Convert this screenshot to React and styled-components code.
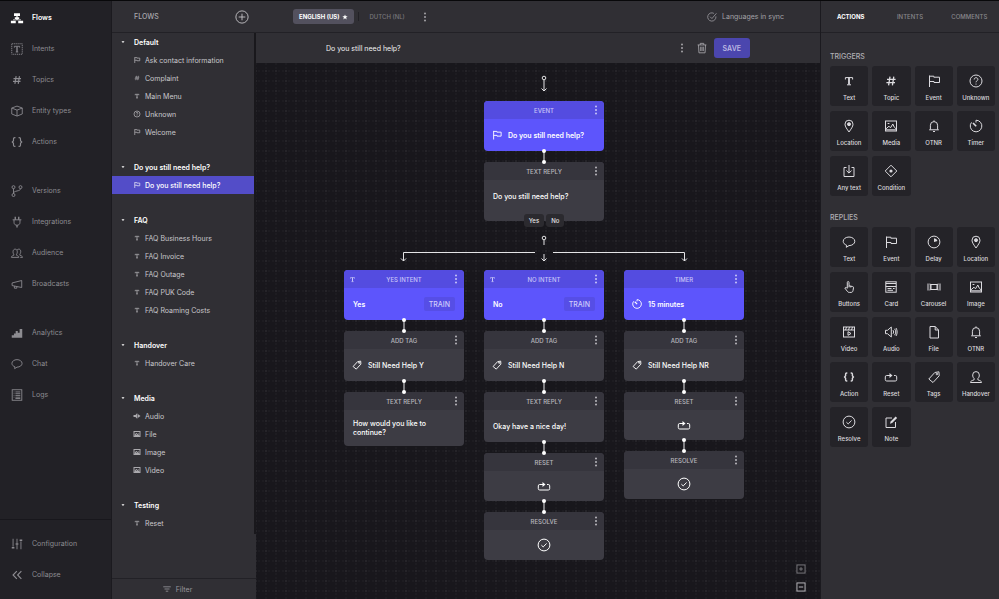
import styled, { createGlobalStyle, css } from "styled-components";

const shapes = {
	flows: (
		<g fill="currentColor" stroke="none">
			<path d="M4.6 2.6h6.8v3.2H4.6zM5.5 7h5v2.2h-5zM1 11h5.6v3H1zM9.4 11H15v3H9.4z" />
			<path d="M7.3 5h1.4v5H7.3zM3.5 9.6h9v1h-9z" />
		</g>
	),
	intents: (
		<>
			<rect x="2" y="2" width="12" height="12" strokeDasharray="1.4 .8" />
			<path d="M5 6.4V4.9h6v1.5M6.6 11.4h2.8" />
			<path d="M8 5v6.4" strokeWidth="1.5" />
		</>
	),
	hash: (
		<path d="M7 3.6 5.6 12.4M10.8 3.6 9.4 12.4M4 6.4h8.6M3.4 9.6H12" strokeWidth="1.3" />
	),
	box: (
		<>
			<path d="M2 4.6 8 2.4l6 2.2v6.8l-6 2.4-6-2.4z" />
			<path d="M2 4.6 8 7l6-2.4M8 7v6.8" />
		</>
	),
	bracesBig: (
		<path
			d="M6.2 3h-.7C4.5 3 4 3.5 4 4.4v2.2L2.6 8 4 9.4v2.2c0 .9.5 1.4 1.5 1.4h.7M9.8 3h.7c1 0 1.5.5 1.5 1.4v2.2L13.4 8 12 9.4v2.2c0 .9-.5 1.4-1.5 1.4h-.7"
			strokeWidth="1.3"
		/>
	),
	branch: (
		<>
			<circle cx="4" cy="3.6" r="1.7" />
			<circle cx="12" cy="3.6" r="1.7" />
			<circle cx="4" cy="12.6" r="1.7" />
			<path d="M4 5.3v5.6M12 5.3c0 3.6-8 1.7-8 5.6" />
		</>
	),
	plug: (
		<>
			<path d="M3 5.5h10M4.6 5.5v3c0 1.9 1.3 3.2 3.4 3.2s3.4-1.3 3.4-3.2v-3" />
			<path d="M6 2v3.4M10 2v3.4M8 11.7v2.5" strokeWidth="1.5" />
		</>
	),
	audience: (
		<>
			<path d="M1.6 13c0-1.5 1.4-1.8 2.7-2.4V9.4C3 8 3 3.6 5.9 3.6S8.8 8 7.5 9.4v1.2c1.3.6 2.6.9 2.6 2.4z" />
			<path d="M8.3 4.2c3-1.8 4.5.8 3.8 3.4-.2.8-.5 1.4-.8 1.8v1.2c1.5.6 3 .9 3 2.4h-2.6" />
		</>
	),
	horn: <path d="M2.4 6.8 13.4 4v8L2.4 9.8zM5 10.4v2.4h2.8V11" />,
	bars: (
		<path
			d="M2 10.5h2.5V8.6h2V5.8h2.4v2H11V3.5h3v10H2z"
			fill="currentColor"
			stroke="none"
		/>
	),
	bubble: (
		<path d="M5.6 11.2C3.6 10.5 2.2 9.1 2.2 7.3 2.2 4.9 4.8 3 8 3s5.8 1.9 5.8 4.3-2.6 4.3-5.8 4.3l-2.7 1.7z" />
	),
	logs: (
		<>
			<rect x="2.5" y="2" width="11" height="12" />
			<path d="M6.2 4.5h5.6M6.2 6.5h5.6M6.2 8.5h5.6M6.2 10.5h5.6M6.2 12h5.6M4.2 4.5H5M4.2 6.5H5M4.2 8.5H5M4.2 10.5H5" />
		</>
	),
	sliders: (
		<>
			<path d="M3.5 2v9M8 2v5M8 9v5M12.5 5v9" />
			<path d="M2 12.2h3M6.5 8h3M11 3.8h3" strokeWidth="1.8" />
		</>
	),
	collapse: <path d="m7.8 3.5-4.3 4.5 4.3 4.5M13 3.5 8.7 8l4.3 4.5" />,
	type: (
		<>
			<path d="M4.4 6.5V4.6h7.2v1.9M6 11.8h4" />
			<path d="M8 4.6v7" strokeWidth="1.8" />
		</>
	),
	flag: <path d="M3.5 14V2.5M3.5 3.2h4.3v1h5.7v5.3H8v-1H3.5" />,
	help: (
		<>
			<circle cx="8" cy="8" r="6" />
			<path d="M6.2 6.5C6.2 5.3 7 4.7 8 4.7s1.9.6 1.9 1.7C9.9 7.8 8 7.7 8 9.3M8 10.6v1" />
		</>
	),
	pin: (
		<>
			<path d="M8 14C6 11 4 8.7 4 6.2a4 4 0 0 1 8 0C12 8.7 10 11 8 14z" />
			<circle cx="8" cy="6.2" r="1.5" fill="currentColor" />
		</>
	),
	image: (
		<>
			<rect x="2.5" y="3" width="11" height="10" />
			<path d="M3 10.8 6 8.2l1.5 1.6L9.8 6l1.5 3.2 1.8 1.6M3 11.8h10M4.6 5.5h1.8" />
		</>
	),
	bell: (
		<path d="M3.2 11.8h9.6M4.4 11.6V7.2a3.6 3.6 0 0 1 7.2 0v4.4M8 3.5V2.4M7 13.5h2" />
	),
	timer: (
		<>
			<path d="M8 4.5V2.2a5.8 5.8 0 1 1-4.5 2.2" />
			<path d="M8.2 8.2 5 5" strokeWidth="1.6" />
		</>
	),
	inbox: <path d="M5.5 4.5H3v9h10v-9h-2.5M8 2v8M5.4 7.5 8 10.1l2.6-2.6" />,
	condition: (
		<>
			<path d="m8 2.2 5.8 5.8L8 13.8 2.2 8z" />
			<circle cx="8" cy="8" r="1.6" fill="currentColor" stroke="none" />
		</>
	),
	delay: (
		<>
			<circle cx="8" cy="8" r="5.9" />
			<path d="M8 8V4.2A3.8 3.8 0 0 1 11.5 7z" fill="currentColor" stroke="none" />
		</>
	),
	hand: (
		<path d="M6.3 9V3.4c0-1.2 1.7-1.2 1.7 0v3.4l3.6.7c.7.1 1 .6.9 1.3l-.5 2.8c-.2 1.1-.8 1.8-2 1.8H8.3c-.9 0-1.4-.3-1.9-1L3.8 9c.7-.8 1.6-.8 2.5.5M8 6.8v1.6M9.8 7.1v1.4" />
	),
	card: (
		<>
			<rect x="2.8" y="2.8" width="10.4" height="10.4" />
			<path d="M2.8 7.5h10.4M4.5 9.5h4M4.5 11.3H10M10 9.5h1.6M3 4.5h10" />
		</>
	),
	carousel: (
		<>
			<rect x="5" y="5.5" width="6" height="5" />
			<path d="M2 4.5v7M14 4.5v7M3.5 5h.8v6h-.8M12.5 5h-.8v6h.8" />
		</>
	),
	video: (
		<>
			<rect x="2.5" y="3" width="11" height="10" />
			<path d="M2.5 6h11M4.5 6l1-3M7.5 6l1-3M10.5 6l1-3" />
			<path d="m7 7.7 3 1.8-3 1.8z" />
		</>
	),
	audio: (
		<path d="M2.5 6.3h2L8.3 3v10L4.5 9.7h-2zM10 6.2c.8 1 .8 2.6 0 3.6M11.5 4.8c1.7 1.7 1.7 4.7 0 6.4M13 4c1.5 2.2 1.5 5.8 0 8" />
	),
	file: <path d="M4 2.5h5.2L12.5 6v8H4zM9.2 2.5V6h3.3" />,
	braces: (
		<path
			d="M6.3 4h-.5c-.8 0-1.2.4-1.2 1.1v1.7L3.6 8l1 1.2v1.7c0 .7.4 1.1 1.2 1.1h.5M9.7 4h.5c.8 0 1.2.4 1.2 1.1v1.7l1 1.2-1 1.2v1.7c0 .7-.4 1.1-1.2 1.1h-.5"
			strokeWidth="1.4"
		/>
	),
	reset: (
		<>
			<path d="M7 6.5H3.7a1.4 1.4 0 0 0-1.4 1.4v2.7A1.4 1.4 0 0 0 3.7 12h8.6a1.4 1.4 0 0 0 1.4-1.4V7.9a1.4 1.4 0 0 0-1.4-1.4H11" />
			<path d="m6.5 4 3 2.5-3 2.5z" fill="currentColor" stroke="none" />
		</>
	),
	tag: (
		<>
			<path d="m2.8 10 6-6.5 4.1-.7.3 4-6.2 6.7z" />
			<circle cx="10.9" cy="5" r=".8" />
		</>
	),
	person: (
		<path d="M2.5 13.5c0-1.7 1.7-1.9 3.6-2.7V9.5C5 8.5 4.7 7.5 4.7 5.9a3.3 3.3 0 0 1 6.6 0c0 1.6-.3 2.6-1.4 3.6v1.3c1.9.8 3.6 1 3.6 2.7z" />
	),
	check: (
		<>
			<circle cx="8" cy="8" r="5.9" />
			<path d="m5.4 8.2 1.8 1.7 3.4-3.4" />
		</>
	),
	synced: (
		<>
			<path d="M13.2 7.2a5.5 5.5 0 1 1-2.7-4" />
			<path d="m5.4 7.6 2.5 2.5 6-7" />
		</>
	),
	note: (
		<>
			<path d="M9 4H3v9.5h9.5V8" />
			<path d="m7 9.8.6-2.2 5-5.1L14.1 4l-5 5z" fill="currentColor" stroke="none" />
		</>
	),
	trash: (
		<path d="M3 4.5h10M6 4.5V2.7h4v1.8M4 4.5l.5 9h7l.5-9M6.5 6.5v5M8 6.5v5M9.5 6.5v5" />
	),
	filter: <path d="M2 4.5h12M4 8h8M6 11.5h4" />,
	plus: (
		<>
			<circle cx="8" cy="8" r="7" />
			<path d="M8 4.2v7.6M4.2 8h7.6" />
		</>
	),
	sound: (
		<path
			d="M1 6h4v4H1zM5 6l3.5-4v12L5 10zM9.5 4 15 8l-5.5 4z"
			fill="currentColor"
			stroke="none"
		/>
	),
	picture: (
		<>
			<rect x="2" y="3" width="12" height="10" strokeWidth="2" />
			<path d="m4 10 3-4 2 4 2-3" strokeWidth="2" />
			<path d="M3 11h10" strokeWidth="3" />
		</>
	),
	star: (
		<path
			d="m8 1 2 5h5l-4 3.2 1.5 5.3L8 11.3l-4.5 3.2L5 9.2 1 6h5z"
			fill="currentColor"
			stroke="none"
		/>
	),
	dots: (
		<g fill="currentColor" stroke="none">
			<circle cx="8" cy="4.5" r="1" />
			<circle cx="8" cy="8" r="1" />
			<circle cx="8" cy="11.5" r="1" />
		</g>
	),
	caret: <path d="M2 5h12L8 12z" fill="currentColor" stroke="none" />,
	zoomIn: (
		<>
			<rect x="1.5" y="1.5" width="13" height="13" />
			<path d="M8 5v6M5 8h6" />
		</>
	),
	zoomOut: (
		<>
			<rect x="1.5" y="1.5" width="13" height="13" />
			<path d="M4.5 8h7" />
		</>
	),
};

const Icon = ({ name, size = 16, weight = 1 }) => (
	<Svg
		width={size}
		height={size}
		viewBox="0 0 16 16"
		strokeWidth={weight}
		aria-hidden="true"
	>
		{shapes[name]}
	</Svg>
);

const navGroups = [
	[
		["flows", "Flows"],
		["intents", "Intents"],
		["hash", "Topics"],
		["box", "Entity types"],
		["bracesBig", "Actions"],
	],
	[
		["branch", "Versions"],
		["plug", "Integrations"],
		["audience", "Audience"],
		["horn", "Broadcasts"],
	],
	[
		["bars", "Analytics"],
		["bubble", "Chat"],
		["logs", "Logs"],
	],
];

const flowGroups = [
	{
		title: "Default",
		items: [
			["flag", "Ask contact information"],
			["hash", "Complaint"],
			["type", "Main Menu"],
			["help", "Unknown"],
			["flag", "Welcome"],
		],
	},
	{
		title: "Do you still need help?",
		items: [["flag", "Do you still need help?", true]],
	},
	{
		title: "FAQ",
		items: [
			["type", "FAQ Business Hours"],
			["type", "FAQ Invoice"],
			["type", "FAQ Outage"],
			["type", "FAQ PUK Code"],
			["type", "FAQ Roaming Costs"],
		],
	},
	{ title: "Handover", items: [["type", "Handover Care"]] },
	{
		title: "Media",
		items: [
			["sound", "Audio"],
			["picture", "File"],
			["picture", "Image"],
			["picture", "Video"],
		],
	},
	{ title: "Testing", items: [["type", "Reset"]] },
];

const triggers = [
	["type", "Text"],
	["hash", "Topic"],
	["flag", "Event"],
	["help", "Unknown"],
	["pin", "Location"],
	["image", "Media"],
	["bell", "OTNR"],
	["timer", "Timer"],
	["inbox", "Any text"],
	["condition", "Condition"],
];

const replies = [
	["bubble", "Text"],
	["flag", "Event"],
	["delay", "Delay"],
	["pin", "Location"],
	["hand", "Buttons"],
	["card", "Card"],
	["carousel", "Carousel"],
	["image", "Image"],
	["video", "Video"],
	["audio", "Audio"],
	["file", "File"],
	["bell", "OTNR"],
	["braces", "Action"],
	["reset", "Reset"],
	["tag", "Tags"],
	["person", "Handover"],
	["check", "Resolve"],
	["note", "Note"],
];

const Link = () => (
	<LinkBox>
		<LinkSvg width="6" height="17" viewBox="0 0 6 17" aria-hidden="true">
			<path d="M3 3v11" stroke="#c9c8cc" strokeWidth="1.2" />
			<circle cx="3" cy="3" r="2" fill="#fff" />
			<circle cx="3" cy="14" r="2" fill="#fff" />
		</LinkSvg>
	</LinkBox>
);

const Node = ({ title, purple, corner, icon, children, $tall, $center }) => (
	<NodeBox $purple={purple}>
		<NodeHead $purple={purple}>
			<Corner>{corner && <Icon name={corner} size={9} weight={1.2} />}</Corner>
			<span>{title}</span>
			<IconButton aria-label={`${title} menu`}>
				<Icon name="dots" />
			</IconButton>
		</NodeHead>
		<NodeBody $tall={$tall} $center={$center} $icon={icon}>
			{icon && <Icon name={icon} size={12} weight={1.2} />}
			{children}
		</NodeBody>
	</NodeBox>
);

const TagNode = ({ text }) => (
	<Node title="ADD TAG" icon="tag">
		{text}
	</Node>
);

const ResetNode = () => (
	<Node title="RESET" $center>
		<Icon name="reset" />
	</Node>
);

const ResolveNode = () => (
	<Node title="RESOLVE" $center>
		<Icon name="check" />
	</Node>
);

const Tiles = ({ title, items }) => (
	<TileSection>
		<TileTitle>{title}</TileTitle>
		<TileGrid>
			{items.map(([icon, label]) => (
				<Tile key={label}>
					<Icon name={icon} />
					{label}
				</Tile>
			))}
		</TileGrid>
	</TileSection>
);

const App = () => {
	return (
		<>
			<Global />
			<Page>
				<Nav>
					{navGroups.map((group, i) => (
						<NavGroup key={i}>
							{group.map(([icon, label]) => (
								<NavItem key={label} href="#" $active={label === "Flows"}>
									<Icon name={icon} size={14} />
									{label}
								</NavItem>
							))}
						</NavGroup>
					))}
					<NavBottom>
						<NavItem href="#">
							<Icon name="sliders" size={14} />
							Configuration
						</NavItem>
						<NavItem href="#">
							<Icon name="collapse" size={14} weight={1.3} />
							Collapse
						</NavItem>
					</NavBottom>
				</Nav>

				<Flows>
					<FlowsHead>
						<FlowsTitle>FLOWS</FlowsTitle>
						<IconButton aria-label="Add flow">
							<Icon name="plus" size={14} />
						</IconButton>
					</FlowsHead>
					<FlowsScroll>
						<FlowList>
							{flowGroups.map(({ title, items }) => (
								<FlowGroup key={title}>
									<GroupTitle>
										<Icon name="caret" size={4} />
										{title}
									</GroupTitle>
									{items.map(([icon, label, active]) => (
										<FlowItem key={label} href="#" $active={active}>
											<Icon name={icon} size={8} weight={1.6} />
											{label}
										</FlowItem>
									))}
								</FlowGroup>
							))}
						</FlowList>
						<Track />
					</FlowsScroll>
					<Filter>
						<Icon name="filter" size={10} weight={1.3} />
						Filter
					</Filter>
				</Flows>

				<Main>
					<Languages>
						<Language $active>
							ENGLISH (US)
							<Icon name="star" size={6} />
						</Language>
						<Divider />
						<Language>DUTCH (NL)</Language>
						<IconButton aria-label="Language menu">
							<Icon name="dots" />
						</IconButton>
						<Sync>
							<Icon name="synced" size={12} />
							Languages in sync
						</Sync>
					</Languages>
					<TitleBar>
						<TitleRow>
							<TitleInput
								aria-label="Flow name"
								defaultValue="Do you still need help?"
							/>
							<IconButton aria-label="Flow menu">
								<Icon name="dots" />
							</IconButton>
							<IconButton aria-label="Delete flow">
								<Icon name="trash" size={14} />
							</IconButton>
							<Save>SAVE</Save>
						</TitleRow>
					</TitleBar>

					<Canvas>
						<Wire width="12" height="38" viewBox="0 0 12 38" aria-hidden="true">
							<circle cx="6" cy="15" r="1.8" />
							<path d="M6 17v11M3.5 25.5 6 28l2.5-2.5" />
						</Wire>
						<Column>
							<Node title="EVENT" icon="flag" purple>
								<strong>Do you still need help?</strong>
							</Node>
							<Link />
							<NodeWithReplies>
								<Node title="TEXT REPLY">Do you still need help?</Node>
								<QuickReplies>
									<QuickReply>Yes</QuickReply>
									<QuickReply>No</QuickReply>
								</QuickReplies>
							</NodeWithReplies>
						</Column>
						<Wire width="292" height="49" viewBox="0 0 292 49" aria-hidden="true">
							<circle cx="146" cy="17" r="1.8" />
							<path d="M146 19v5M5.5 40v-8.5H137M155 31.5h131.5V40M146 33v7" />
							<path d="M3 37.5 5.5 40 8 37.5M143.5 37.5 146 40l2.5-2.5M284 37.5l2.5 2.5 2.5-2.5" />
						</Wire>
						<Branches>
							<Column>
								<Node title="YES INTENT" corner="type" purple>
									<strong>Yes</strong>
									<Train>TRAIN</Train>
								</Node>
								<Link />
								<TagNode text="Still Need Help Y" />
								<Link />
								<Node title="TEXT REPLY" $tall>
									How would you like to continue?
								</Node>
							</Column>
							<Column>
								<Node title="NO INTENT" corner="type" purple>
									<strong>No</strong>
									<Train>TRAIN</Train>
								</Node>
								<Link />
								<TagNode text="Still Need Help N" />
								<Link />
								<Node title="TEXT REPLY">Okay have a nice day!</Node>
								<Link />
								<ResetNode />
								<Link />
								<ResolveNode />
							</Column>
							<Column>
								<Node title="TIMER" icon="timer" purple>
									<strong>15 minutes</strong>
								</Node>
								<Link />
								<TagNode text="Still Need Help NR" />
								<Link />
								<ResetNode />
								<Link />
								<ResolveNode />
							</Column>
						</Branches>
						<Zoom>
							<IconButton aria-label="Zoom in">
								<Icon name="zoomIn" size={10} weight={1.6} />
							</IconButton>
							<IconButton aria-label="Zoom out" $bright>
								<Icon name="zoomOut" size={10} weight={1.6} />
							</IconButton>
						</Zoom>
					</Canvas>
				</Main>

				<Panel>
					<Tabs>
						<Tab $active>ACTIONS</Tab>
						<Tab>INTENTS</Tab>
						<Tab>COMMENTS</Tab>
					</Tabs>
					<Tiles title="TRIGGERS" items={triggers} />
					<Tiles title="REPLIES" items={replies} />
				</Panel>
			</Page>
		</>
	);
};

export default App;

const Global = createGlobalStyle`
	* {
		box-sizing: border-box;
	}
	body {
		margin: 0;
		background: #18171c;
		color: #c9c8cc;
		font-family: Inter, "Liberation Sans", sans-serif;
		font-size: 7px;
		line-height: 9px;
	}
	button, input {
		font: inherit;
		color: inherit;
		background: none;
		border: 0;
		padding: 0;
	}
	a {
		color: inherit;
		text-decoration: none;
	}
`;

const Svg = styled.svg`
	display: block;
	flex: none;
	fill: none;
	stroke: currentColor;
`;

const Page = styled.div`
	display: grid;
	grid-template-columns: 112px 144px 1fr 179px;
	min-height: 100vh;
	border-top: 1px solid #08080a;
`;

const IconButton = styled.button`
	display: flex;
	align-items: center;
	justify-content: center;
	color: ${({ $bright }) => ($bright ? "#b5b4b9" : "inherit")};
`;

const bar = css`
	display: flex;
	align-items: center;
	height: 32px;
	border-bottom: 1px solid #222126;
`;

const Nav = styled.nav`
	display: flex;
	flex-direction: column;
	gap: 18px;
	padding-top: 1px;
	background: #222126;
	border-right: 1px solid #1b1a1f;
`;

const NavGroup = styled.div`
	display: flex;
	flex-direction: column;
`;

const NavItem = styled.a`
	display: flex;
	align-items: center;
	gap: 8px;
	height: 31px;
	padding-left: 10px;
	color: ${({ $active }) => ($active ? "#fff" : "#8d8c91")};
	font-weight: ${({ $active }) => ($active ? 600 : 400)};
`;

const NavBottom = styled.div`
	margin-top: auto;
	padding: 8px 0 9px;
	border-top: 1px solid #18171c;
`;

const Flows = styled.aside`
	display: flex;
	flex-direction: column;
	background: #302f34;
`;

const FlowsHead = styled.div`
	${bar}
	justify-content: space-between;
	padding: 0 7px 0 22px;
`;

const FlowsTitle = styled.h2`
	margin: 0;
	font-size: 7px;
	font-weight: 500;
	color: #a9a8ad;
`;

const FlowsScroll = styled.div`
	display: flex;
	flex: 1;
`;

const FlowList = styled.div`
	display: flex;
	flex-direction: column;
	flex: 1;
	gap: 17px;
`;

const Track = styled.div`
	width: 2px;
	margin-bottom: 44px;
	background: #19181c;
`;

const FlowGroup = styled.div`
	display: flex;
	flex-direction: column;
`;

const GroupTitle = styled.button`
	display: flex;
	align-items: center;
	gap: 9px;
	height: 18px;
	padding-left: 9px;
	color: #fff;
	font-weight: 600;
`;

const FlowItem = styled.a`
	display: flex;
	align-items: center;
	gap: 4px;
	height: 18px;
	padding-left: 21px;
	color: ${({ $active }) => ($active ? "#fff" : "#c9c8cc")};
	background: ${({ $active }) => ($active ? "#534dc8" : "none")};
	font-weight: ${({ $active }) => ($active ? 500 : 400)};

	svg {
		opacity: 0.8;
	}
`;

const Filter = styled.button`
	display: flex;
	align-items: center;
	justify-content: center;
	gap: 4px;
	height: 21px;
	padding-right: 14px;
	border-top: 1px solid #222126;
	color: #98979c;
`;

const Main = styled.main`
	display: flex;
	flex-direction: column;
`;

const Languages = styled.div`
	${bar}
	padding: 0 36px 0 37px;
	background: #302f34;
	color: #a3a2a7;
`;

const Language = styled.button`
	display: flex;
	align-items: center;
	gap: 3px;
	height: 15px;
	padding: 0 6px;
	border-radius: 3px;
	font-size: 6px;
	color: ${({ $active }) => ($active ? "#fff" : "#77767b")};
	background: ${({ $active }) => ($active ? "#53515e" : "none")};
	font-weight: ${({ $active }) => ($active ? 700 : 500)};

	& + button {
		margin-left: 6px;
	}
`;

const Divider = styled.span`
	width: 1px;
	height: 9px;
	margin: 0 4px;
	background: #222126;
`;

const Sync = styled.div`
	display: flex;
	align-items: center;
	gap: 4px;
	margin-left: auto;
`;

const TitleBar = styled.div`
	display: flex;
	align-items: center;
	justify-content: center;
	height: 30px;
	background: #302f34;
	color: #a3a2a7;
`;

const TitleRow = styled.div`
	display: flex;
	align-items: center;
	gap: 5px;
	flex: 0 1 424px;
`;

const TitleInput = styled.input`
	flex: 1;
	min-width: 0;
	color: #f1f1f2;
`;

const Save = styled.button`
	height: 20px;
	padding: 0 9px;
	border-radius: 3px;
	background: #4b46ae;
	color: #bbb8e2;
	font-weight: 600;
`;

const Canvas = styled.section`
	display: flex;
	flex-direction: column;
	align-items: center;
	flex: 1;
	position: relative;
	padding: 0 0 38px 12px;
	background-color: #18171c;
	background-image:
		radial-gradient(circle at 5px 5px, #252429 1px, transparent 1px),
		radial-gradient(circle at 2px 5px, #1d1c21 1px, transparent 1px),
		radial-gradient(circle at 8px 5px, #1d1c21 1px, transparent 1px),
		radial-gradient(circle at 5px 2px, #1d1c21 1px, transparent 1px),
		radial-gradient(circle at 5px 8px, #1d1c21 1px, transparent 1px);
	background-size: 10px 10px;
	background-position: 5px 3px;
`;

const Wire = styled.svg`
	display: block;
	flex: none;
	fill: none;
	stroke: #e4e4e6;
`;

const Branches = styled.div`
	display: flex;
	align-items: flex-start;
	gap: 20px;
`;

const Column = styled.div`
	display: flex;
	flex-direction: column;
	width: 120px;
`;

const LinkBox = styled.div`
	display: flex;
	align-items: center;
	justify-content: center;
	height: 11px;
	position: relative;
	z-index: 1;
`;

const LinkSvg = styled.svg`
	flex: none;
`;

const NodeBox = styled.article`
	border-radius: 4px;
	background: ${({ $purple }) => ($purple ? "#5d55fc" : "#3d3c44")};
	color: #fff;
`;

const NodeHead = styled.header`
	display: grid;
	grid-template-columns: 16px 1fr 16px;
	align-items: center;
	height: 18px;
	border-radius: 4px 4px 0 0;
	background: ${({ $purple }) => ($purple ? "#544ce0" : "#36353d")};
	color: ${({ $purple }) => ($purple ? "#c8c5f8" : "#b9b8be")};
	font-size: 6px;
	font-weight: 500;
	text-align: center;
`;

const Corner = styled.span`
	display: flex;
	justify-content: center;
`;

const NodeBody = styled.div`
	display: flex;
	align-items: center;
	justify-content: ${({ $center }) => ($center ? "center" : "flex-start")};
	gap: 5px;
	min-height: ${({ $tall, $center }) =>
		$tall ? "36px" : $center ? "30px" : "32px"};
	padding: ${({ $icon }) => ($icon ? "0 7px" : "0 9px")};
	font-weight: 500;

	strong {
		font-weight: 600;
	}
`;

const Train = styled.button`
	height: 14px;
	margin-left: auto;
	padding: 0 5px;
	border-radius: 2px;
	background: #564ee6;
	color: #cfccfb;
	font-weight: 500;
`;

const NodeWithReplies = styled.div`
	position: relative;
	padding-bottom: 9px;
	border-radius: 4px;
	background: #3d3c44;
`;

const QuickReplies = styled.div`
	display: flex;
	justify-content: center;
	gap: 2px;
	position: absolute;
	inset: auto 0 -6px;
`;

const QuickReply = styled.button`
	height: 13px;
	padding: 0 5px;
	border-radius: 3px;
	background: #2b2a2f;
	color: #e4e4e6;
	font-size: 6px;
	font-weight: 500;
`;

const Zoom = styled.div`
	display: flex;
	flex-direction: column;
	gap: 8px;
	position: absolute;
	right: 14px;
	bottom: 7px;
	color: #77767b;
`;

const Panel = styled.aside`
	background: #302f34;
	border-left: 1px solid #1b1a1f;
`;

const Tabs = styled.div`
	${bar}
`;

const Tab = styled.button`
	flex: 1;
	font-size: 6px;
	font-weight: ${({ $active }) => ($active ? 700 : 500)};
	color: ${({ $active }) => ($active ? "#fff" : "#88878c")};
`;

const TileSection = styled.section`
	padding: 15px 4px 0 9px;

	& + section {
		padding-top: 13px;
	}
`;

const TileTitle = styled.h3`
	margin: 0;
	font-size: 7px;
	line-height: 18px;
	font-weight: 500;
	color: #b1b0b5;
`;

const TileGrid = styled.div`
	display: grid;
	grid-template-columns: repeat(4, 1fr);
	gap: 5px 4px;
`;

const Tile = styled.button`
	display: flex;
	flex-direction: column;
	align-items: center;
	gap: 4px;
	height: 40px;
	padding-top: 7px;
	border-radius: 3px;
	background: #242328;
	color: #dcdbdf;
	font-size: 6px;
	font-weight: 500;
`;
